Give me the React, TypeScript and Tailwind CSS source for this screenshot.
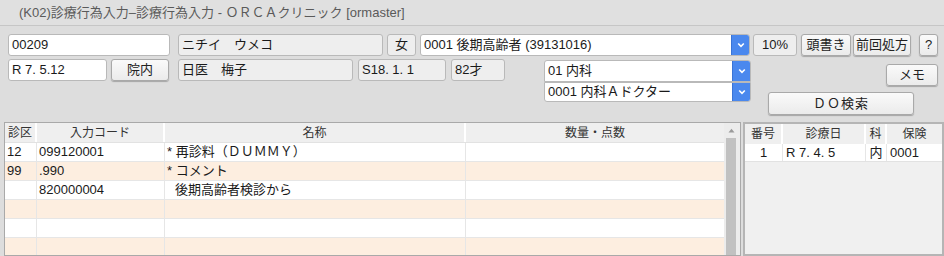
import React from "react";

const font = { fontFamily: '"Liberation Sans", "Noto Sans CJK JP", sans-serif' };

function Field({ w, children, ro = false, className = "" }: { w: string; children?: React.ReactNode; ro?: boolean; className?: string }) {
  return (
    <div
      className={`${w} h-[22px] shrink-0 flex items-center px-[3px] rounded-[3px] border border-[#b9b9b9] text-[13px] text-[#1a1a1a] whitespace-pre overflow-hidden ${ro ? "bg-[#eeeeee]" : "bg-white"} ${className}`}
    >
      {children}
    </div>
  );
}

function Btn({ w, h = "h-[22px]", children, className = "" }: { w: string; h?: string; children?: React.ReactNode; className?: string }) {
  return (
    <div
      className={`${w} ${h} shrink-0 flex items-center justify-center rounded-[3px] border border-[#a9a9a9] bg-gradient-to-b from-[#fafafa] to-[#ebebeb] shadow-[0_1px_1px_rgba(0,0,0,0.25)] text-[13px] text-[#222] whitespace-pre`}
    >
      <span className={className}>{children}</span>
    </div>
  );
}

function Chevron() {
  return (
    <svg width="8" height="6" viewBox="0 0 8 6">
      <path d="M1.2 1.5 L4 4.3 L6.8 1.5" stroke="white" strokeWidth="1.6" fill="none" />
    </svg>
  );
}

function Combo({ w, h = "h-[22px]", children, rounded = "rounded-[3px]" }: { w: string; h?: string; children?: React.ReactNode; rounded?: string }) {
  return (
    <div className={`${w} ${h} shrink-0 flex ${rounded} border border-[#b9b9b9] bg-white overflow-hidden`}>
      <div className="flex-1 flex items-center px-[3px] text-[13px] text-[#1a1a1a] whitespace-pre">{children}</div>
      <div className="w-[18px] bg-[#4a88ee] flex items-center justify-center border-l border-[#3a74d6]">
        <Chevron />
      </div>
    </div>
  );
}

const cols = ["w-[32px]", "w-[128px]", "w-[301px]", "w-[258px]"];
const rows: { bg: string; c: string[] }[] = [
  { bg: "bg-white", c: ["12", "099120001", "* 再診料（ＤＵＭＭＹ）", ""] },
  { bg: "bg-[#fdeee0]", c: ["99", ".990", "* コメント", ""] },
  { bg: "bg-white", c: ["", "820000004", "後期高齢者検診から", ""] },
  { bg: "bg-[#fdeee0]", c: ["", "", "", ""] },
  { bg: "bg-white", c: ["", "", "", ""] },
  { bg: "bg-[#fdeee0]", c: ["", "", "", ""] },
];

export default function App() {
  return (
    <div className="w-[944px] h-[256px] overflow-hidden bg-[#dddddd] flex flex-col" style={font}>
      {/* title bar */}
      <div className="h-[26px] shrink-0 bg-[#e0e0e0] border-b border-[#c6c6c6] flex items-center pl-[19px] text-[13px] text-[#5a5a5a]">
        (K02)診療行為入力–診療行為入力 - ＯＲＣＡクリニック [ormaster]
      </div>

      {/* row 1 */}
      <div className="flex items-center mt-[8px] pl-[8px] h-[22px] shrink-0">
        <Field w="w-[162px]">00209</Field>
        <Field w="w-[205px]" ro className="ml-[8px]">ニチイ　ウメコ</Field>
        <Field w="w-[29px]" ro className="ml-[4px] justify-center">女</Field>
        <div className="ml-[4px]">
          <Combo w="w-[330px]">0001 後期高齢者 (39131016)</Combo>
        </div>
        <Field w="w-[44px]" ro className="ml-[3px] justify-center">10%</Field>
        <div className="ml-[4px]">
          <Btn w="w-[50px]">頭書き</Btn>
        </div>
        <div className="ml-[2px]">
          <Btn w="w-[58px]">前回処方</Btn>
        </div>
        <div className="ml-[8px]">
          <Btn w="w-[19px]">?</Btn>
        </div>
      </div>

      {/* row 2 + right side */}
      <div className="flex items-start mt-[3px] pl-[8px] shrink-0">
        <div className="flex items-center h-[22px]">
          <Field w="w-[99px]">R 7. 5.12</Field>
          <div className="ml-[4px]">
            <Btn w="w-[58px]">院内</Btn>
          </div>
          <Field w="w-[175px]" ro className="ml-[9px]">日医　梅子</Field>
          <Field w="w-[88px]" ro className="ml-[5px]">S18. 1. 1</Field>
          <Field w="w-[54px]" ro className="ml-[5px]">82才</Field>
        </div>
        <div className="ml-[39px] mt-[1px] flex flex-col">
          <Combo w="w-[207px]" h="h-[22px]" rounded="rounded-t-[3px]">01 内科</Combo>
          <Combo w="w-[207px]" h="h-[20px]" rounded="rounded-b-[3px]">0001 内科Ａドクター</Combo>
        </div>
        <div className="ml-[17px] w-[170px] flex flex-col">
          <div className="self-end mt-[5px]">
            <Btn w="w-[52px]">メモ</Btn>
          </div>
          <div className="mt-[6px]">
            <Btn w="w-[146px]" h="h-[23px]" className="tracking-[1px]">ＤＯ検索</Btn>
          </div>
        </div>
      </div>

      {/* tables */}
      <div className="flex mt-[7px] pl-[4px] flex-1 min-h-0">
        {/* left table */}
        <div className="w-[737px] border border-[#a9a9a9] bg-[#e9e9e9] flex overflow-hidden">
          <div className="w-[719px] flex flex-col">
            <div className="h-[20px] shrink-0 flex bg-[#efefef] border-b border-[#e2e2e2]">
              {["診区", "入力コード", "名称", "数量・点数"].map((h, i) => (
                <div key={i} className={`${cols[i]} flex items-center justify-center text-[12px] text-[#333] ${i < 3 ? "border-r-2 border-white" : ""}`}>
                  {h}
                </div>
              ))}
            </div>
            {rows.map((r, ri) => (
              <div key={ri} className={`h-[19px] shrink-0 flex ${r.bg} border-b border-[#e6e6e6]`}>
                {r.c.map((c, ci) => (
                  <div
                    key={ci}
                    className={`${cols[ci]} flex items-center text-[13px] text-[#1a1a1a] whitespace-pre ${ci < 3 ? "border-r border-[#e6e6e6]" : ""} ${ci === 2 && ri === 2 ? "pl-[10px]" : "pl-[2px]"}`}
                  >
                    {c}
                  </div>
                ))}
              </div>
            ))}
          </div>
          {/* scrollbar */}
          <div className="w-[16px] flex flex-col bg-[#ececec] pl-[2px] pr-[4px]">
            <div className="h-[15px] flex items-center justify-center">
              <svg width="7" height="5" viewBox="0 0 7 5">
                <path d="M0.5 4.5 L3.5 0.8 L6.5 4.5 Z" fill="#9a9a9a" />
              </svg>
            </div>
            <div className="flex-1 bg-[#c1c1c1]" />
          </div>
        </div>

        {/* right panel */}
        <div className="ml-[2px] w-[201px] border-2 border-[#b5b5b5] bg-[#f0f0f0] flex flex-col">
          <div className="h-[20px] flex bg-[#efefef]">
            {[
              ["番号", "w-[38px]"],
              ["診療日", "w-[83px]"],
              ["科", "w-[21px]"],
              ["保険", "flex-1"],
            ].map(([h, w], i) => (
              <div key={i} className={`${w} flex items-center justify-center text-[12px] text-[#333] ${i < 3 ? "border-r-2 border-white" : ""}`}>
                {h}
              </div>
            ))}
          </div>
          <div className="h-[18px] flex bg-white border-b border-[#e2e2e2] text-[13px] text-[#1a1a1a]">
            <div className="w-[38px] flex items-center justify-center border-r border-[#e6e6e6]">1</div>
            <div className="w-[83px] flex items-center pl-[3px] whitespace-pre border-r border-[#e6e6e6]">R 7. 4. 5</div>
            <div className="w-[21px] flex items-center justify-center border-r border-[#e6e6e6]">内</div>
            <div className="flex-1 flex items-center pl-[3px]">0001</div>
          </div>
        </div>
      </div>
    </div>
  );
}
